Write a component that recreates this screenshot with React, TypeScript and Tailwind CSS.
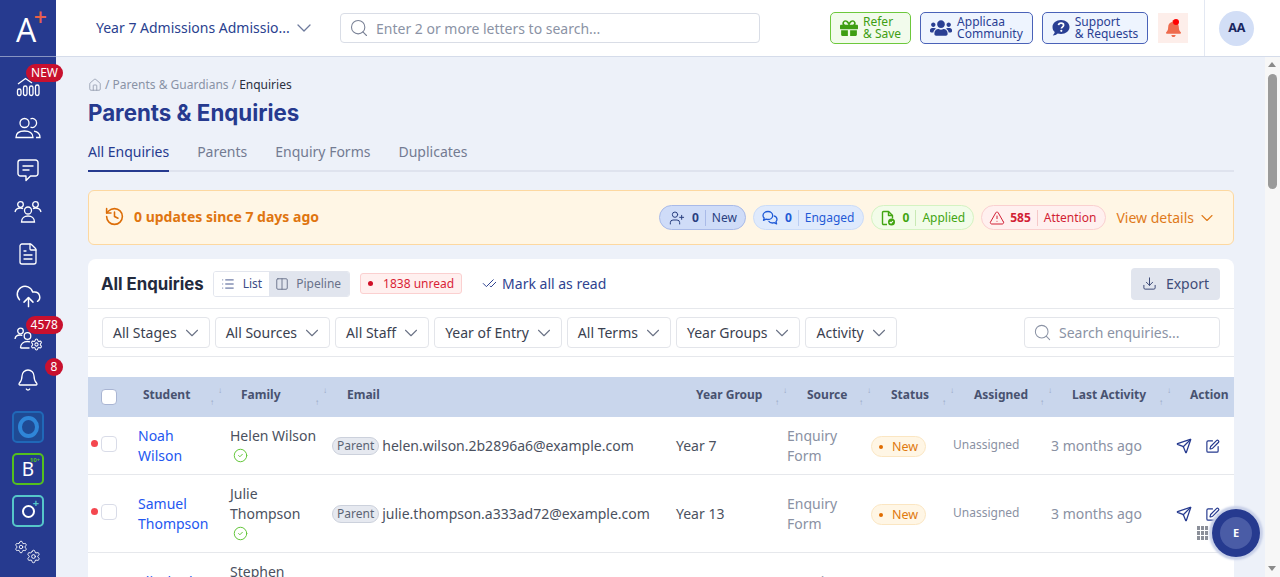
import React from "react";
import {
  House, History, UserPlus, TriangleAlert, ChevronDown, Search, List, Columns2,
  CheckCheck, Download, Send, SquarePen, CircleCheck, FileText, CloudUpload, Bell, Settings,
} from "lucide-react";
import { FaGift, FaUsers, FaBell } from "react-icons/fa";

const Side = ({ children, className = "" }: { children: React.ReactNode; className?: string }) => (
  <div className={`relative flex h-[42px] w-[56px] shrink-0 items-center justify-center text-white ${className}`}>{children}</div>
);

const UserGroup = () => (
  <svg width="28" height="24" viewBox="0 0 28 24" fill="none" stroke="white" strokeWidth="1.3">
    <circle cx="14" cy="10.5" r="3.5" />
    <path d="M7.5 22c0-4 3-6 6.500-6s6.500 2 6.500 6z" />
    <circle cx="6.500" cy="4.500" r="2.800" />
    <circle cx="21.500" cy="4.500" r="2.800" />
    <path d="M1 12c.5-2.500 3-4 5.500-4 1 0 1.800.2 2.500.6M27 12c-.5-2.500-3-4-5.500-4-1 0-1.800.2-2.500.6" />
  </svg>
);

const Sidebar = () => (
  <aside className="flex h-full w-[56px] shrink-0 flex-col bg-[#263a8f]">
    <div className="flex h-[57px] shrink-0 items-center justify-center border-b border-[#c8d0e4]/60">
      <div className="relative h-[30px] w-[30px]">
        <span className="absolute left-[3px] top-[-2px] text-[32px] font-normal leading-[38px] text-white [font-family:'Open_Sans']">A</span>
        <span className="absolute right-[-4px] top-[-8px] text-[23px] font-semibold leading-[25px] text-[#e8604c] [font-family:'Open_Sans']">+</span>
      </div>
    </div>
    <div className="flex flex-col pt-[8px]">
      <Side>
        <svg width="24" height="22" viewBox="0 0 24 22" fill="none" stroke="white" strokeWidth="1.300">
          <path d="M2 9 L9.500 3.500 L16 8" />
          <rect x="1.500" y="14" width="3.500" height="6.500" rx="1.700" />
          <rect x="7.500" y="11" width="3.500" height="9.500" rx="1.700" />
          <rect x="13.500" y="11" width="3.500" height="9.500" rx="1.700" />
          <rect x="19.500" y="10" width="3.500" height="10.500" rx="1.700" />
        </svg>
        <span className="absolute right-[-7px] top-[-1px] flex h-[18px] items-center rounded-full bg-[#c8102e] px-[5px] text-[12px] text-white">NEW</span>
      </Side>
      <Side>
        <svg width="26" height="22" viewBox="0 0 26 22" fill="none" stroke="white" strokeWidth="1.300">
          <circle cx="9.500" cy="6" r="4.500" />
          <path d="M1 20.500c0-4.500 3.500-6.500 8.500-6.500s8.500 2 8.500 6.500z" />
          <path d="M15.500 1.800a4.500 4.500 0 1 1 0 8.400M19 14.200c3.500.6 6 2.600 6 6.300h-4" />
        </svg>
      </Side>
      <Side>
        <svg width="22" height="24" viewBox="0 0 22 24" fill="none" stroke="white" strokeWidth="1.400" strokeLinecap="round" strokeLinejoin="round">
          <path d="M3.500 2h15a2.500 2.500 0 0 1 2.500 2.500v11a2.500 2.500 0 0 1-2.500 2.500h-5L9 22.500V18H3.500A2.500 2.500 0 0 1 1 15.500v-11A2.500 2.500 0 0 1 3.500 2z" />
          <path d="M6 8h10M6 12h6" />
        </svg>
      </Side>
      <Side><UserGroup /></Side>
      <Side><FileText size={24} strokeWidth={1.3} /></Side>
      <Side><CloudUpload size={27} strokeWidth={1.3} /></Side>
      <Side>
        <svg width="28" height="24" viewBox="0 0 28 24" fill="none" stroke="white" strokeWidth="1.3" className="absolute left-[14px] top-[10px]">
          <circle cx="6.500" cy="4" r="2.800" />
          <path d="M1 12c.3-2.500 2.500-4 5-4 .9 0 1.500.1 2.300.5" />
          <circle cx="13.500" cy="9" r="3.300" />
          <path d="M6.500 21c0-4 3-6.500 7-6.500 1 0 1.800.1 2.500.4M6.500 21h9" />
        </svg>
        <Settings size={13} strokeWidth={1.900} className="absolute left-[30px] top-[21px]" />
        <span className="absolute right-[-7px] top-[-1px] flex h-[18px] items-center rounded-full bg-[#c8102e] px-[5px] text-[12px] text-white">4578</span>
      </Side>
      <Side><Bell size={24} strokeWidth={1.3} />
        <span className="absolute right-[-7px] top-[-1px] flex h-[18px] w-[18px] items-center justify-center rounded-full bg-[#c8102e] text-[12px] text-white">8</span>
      </Side>
      <div className="flex flex-col items-center gap-[10px] pt-[10px]">
        <div className="flex h-[32px] w-[32px] items-center justify-center rounded-[5px] border-2 border-[#2068b8] bg-[#1f4a94]">
          <div className="h-[22px] w-[21px] rounded-[50%] border-[4px] border-[#2f86d8]" />
        </div>
        <div className="relative flex h-[32px] w-[32px] items-center justify-center rounded-[5px] border-2 border-[#54c01e] text-[19px] text-white">
          B<span className="absolute right-[2px] top-[1px] text-[6px] font-bold text-[#54c01e]">10+</span>
        </div>
        <div className="relative flex h-[32px] w-[32px] items-center justify-center rounded-[5px] border-2 border-[#56c6c9] text-white">
          <div className="h-[13px] w-[13px] rounded-full border-2 border-white" />
          <span className="absolute right-[3px] top-[-2px] text-[11px] font-bold text-[#56c6c9]">+</span>
        </div>
      </div>
      <div className="relative mt-[13px] h-[26px] w-[56px]">
        <Settings size={14} strokeWidth={1.500} className="absolute left-[14px] top-[0px] text-white" />
        <Settings size={15} strokeWidth={1.500} className="absolute left-[26px] top-[9px] text-white" />
      </div>
    </div>
  </aside>
);

const TopBtn = ({ icon, a, b, green }: { icon: React.ReactNode; a: string; b: string; green?: boolean }) => (
  <div className={`flex h-[32px] items-center gap-[5px] rounded-[5px] border px-[9px] text-[12px] leading-[12px] ${green ? "border-[#6dc83c] bg-[#f2fbec] text-[#3f9e14]" : "border-[#4a62b8] bg-[#eef4fe] text-[#2a3f93]"}`}>
    {icon}
    <div className="flex flex-col"><span>{a}</span><span>{b}</span></div>
  </div>
);

const Header = () => (
  <header className="flex h-[57px] shrink-0 items-center border-b border-[#d5dcea] bg-white">
    <div className="flex w-[284px] shrink-0 items-center pl-[40px] text-[14px] text-[#2a3f8f]">
      <span className="-mt-[1px]">Year 7 Admissions Admissio...</span>
      <ChevronDown size={24} strokeWidth={1.300} className="ml-[2px] text-[#6d7a9c]" />
    </div>
    <div className="flex h-[30px] w-[420px] shrink-0 items-center gap-[7px] rounded-[4px] border border-[#d9dde6] px-[8px] text-[14px] text-[#8b93a5]">
      <Search size={20} strokeWidth={1.3} className="text-[#7a8296]" />
      <span>Enter 2 or more letters to search...</span>
    </div>
    <div className="ml-[70px] flex items-center gap-[9px]">
      <TopBtn green icon={<FaGift size={18} />} a="Refer" b="& Save" />
      <TopBtn icon={<FaUsers size={22} />} a="Applicaa" b="Community" />
      <TopBtn
        icon={
          <svg width="18" height="18" viewBox="0 0 18 18">
            <path d="M9 1c4.700 0 8.500 3 8.500 7S13.700 15 9 15c-1.200 0-2.300-.2-3.300-.5C4.500 15.600 2.800 16.500 .8 16.500c1-1 1.700-2.200 1.900-3.400C1.300 11.900.5 10.100.5 8 .5 4 4.300 1 9 1z" fill="#2a3f93" />
            <path d="M6.500 6.200c.2-1.300 1.200-2 2.600-2 1.500 0 2.500.8 2.500 2 0 1.900-2.200 1.800-2.200 3.300" fill="none" stroke="white" strokeWidth="1.700" />
            <circle cx="9.300" cy="11.800" r="1.100" fill="white" />
          </svg>
        }
        a="Support"
        b="& Requests"
      />
      <div className="relative ml-[1px] flex h-[30px] w-[30px] items-center justify-center bg-[#fdeeea] text-[#ee6b4d]">
        <FaBell size={17} />
        <span className="absolute right-[9px] top-[6px] h-[6px] w-[6px] rounded-full bg-[#f00]" />
      </div>
    </div>
    <div className="ml-[16px] flex h-[56px] flex-1 items-center border-l border-[#e3e8f2] pl-[14px]">
      <div className="flex h-[35px] w-[35px] items-center justify-center rounded-full bg-[#d2def6] text-[12.500px] font-bold text-[#1a2760]">AA</div>
    </div>
  </header>
);

const Pill = ({ cls, icon, n, label, divider, nMl = "ml-[7px]" }: { cls: string; icon: React.ReactNode; n: string; label: string; divider: string; nMl?: string }) => (
  <div className={`flex h-[25px] items-center rounded-full border text-[12px] ${cls}`}>
    {icon}
    <span className={`${nMl} font-bold`}>{n}</span>
    <span className={`mx-[6px] h-[16px] w-px ${divider}`} />
    <span>{label}</span>
  </div>
);

const Filter = ({ label }: { label: string }) => (
  <div className="flex h-[31px] items-center gap-[4px] rounded-[4px] border border-[#e3e5ea] bg-white pl-[10px] pr-[6px] text-[14px] text-[#3a4150]">
    <span>{label}</span>
    <ChevronDown size={22} strokeWidth={1.200} className="text-[#6b7386]" />
  </div>
);

const cols = "grid grid-cols-[50px_92px_102px_344px_111px_84px_82px_98px_125px_58px]";

const Th = ({ label, pl, sort }: { label: string; pl: string; sort?: string }) => (
  <div className={`relative flex h-[40px] items-center pb-[4px] text-[12px] font-bold text-[#485270] ${pl}`}>
    {label}
    {sort && (
      <span className={`absolute top-0 h-[40px] w-[12px] text-[8px] leading-none text-[#98a6c4] ${sort}`}>
        <span className="absolute left-0 top-[21px]">↑</span>
        <span className="absolute right-0 top-[9px]">↓</span>
      </span>
    )}
  </div>
);

type RowT = { s: string[]; f: string[]; email: string; y: string; h: string };

const Row = ({ s, f, email, y, h }: RowT) => (
  <div className={`${cols} ${h} items-center border-b border-[#e6e8ec] bg-white text-[14px] leading-[20px]`}>
    <div className="relative -mt-[3px] flex items-center pl-[13px]">
      <span className="absolute left-[3px] -mt-[2px] h-[7px] w-[7px] rounded-full bg-[#f4474f]" />
      <span className="h-[16px] w-[16px] rounded-[4px] border border-[#d9dce8] bg-white" />
    </div>
    <div className="text-[#2357f0]">{s.map((x) => <div key={x}>{x}</div>)}</div>
    <div className="text-[#4b5160]">
      {f.map((x) => <div key={x}>{x}</div>)}
      <CircleCheck size={15} strokeWidth={1.600} className="mx-[3px] my-[2px] text-[#63c63a]" />
    </div>
    <div className="flex items-center text-[#4b5160]">
      <span className="mr-[3px] flex h-[18px] items-center rounded-full border border-[#ccd1dc] bg-[#e6e9f0] px-[4px] text-[12px] text-[#5c6474]">Parent</span>
      {email}
    </div>
    <div className="text-[#4b5160]">{y}</div>
    <div className="text-[#8a91a3]"><div>Enquiry</div><div>Form</div></div>
    <div>
      <span className="inline-flex h-[21px] items-center gap-[9px] rounded-full border border-[#fbe6c2] bg-[#fff6e5] pl-[7px] pr-[7px] text-[12.500px] text-[#e07a10]">
        <span className="h-[4px] w-[4px] rounded-full bg-[#e06c00]" />New
      </span>
    </div>
    <div className="-mt-[2px] text-[12px] text-[#8a91a3]">Unassigned</div>
    <div className="text-[#8a91a3]">3 months ago</div>
    <div className="mt-[1px] flex items-center gap-[13px] text-[#263a8f]">
      <Send size={16} strokeWidth={1.900} />
      <SquarePen size={15} strokeWidth={1.900} />
    </div>
  </div>
);

const ChatsIcon = () => (
  <svg width="16" height="16" viewBox="0 0 16 16" fill="none" stroke="currentColor" strokeWidth="1.300" strokeLinejoin="round">
    <path d="M6 1.500c2.600 0 4.700 1.800 4.700 4S8.600 9.500 6 9.500c-.7 0-1.300-.1-1.900-.3L1.500 10.300l.7-2.200C1.400 7.400 1 6.500 1 5.500c0-2.200 2.200-4 5-4z" />
    <path d="M11.800 5.800c1.800.4 3.200 1.800 3.200 3.500 0 .9-.4 1.700-1 2.300l.6 2.200-2.500-1.100c-.5.200-1.100.3-1.700.3-1.700 0-3.100-.8-3.800-2" />
  </svg>
);

const FileBadgeIcon = () => (
  <svg width="16" height="16" viewBox="0 0 16 16" fill="none" stroke="currentColor" strokeWidth="1.400" strokeLinejoin="round">
    <path d="M7 14.500H3.500a1 1 0 0 1-1-1v-11a1 1 0 0 1 1-1h5l4 4v3" />
    <path d="M8.500 1.500v4h4" />
    <circle cx="11.500" cy="12" r="3.500" fill="currentColor" stroke="none" />
    <path d="M9.800 12l1.200 1.200 2-2.200" stroke="white" strokeWidth="1.100" />
  </svg>
);

export default function App() {
  return (
    <div className="flex h-[577px] w-[1280px] overflow-hidden bg-[#edf1f9] [font-family:'Noto_Sans',sans-serif]">
      <Sidebar />
      <div className="flex min-w-0 flex-1 flex-col">
        <Header />
        <div className="flex min-h-0 flex-1">
          <main className="w-[1209px] shrink-0 overflow-hidden pl-[32px] pr-[31px]">
            <div className="mt-[17px] flex h-[21px] items-center gap-[3px] text-[12px] text-[#8a93a6]">
              <House size={14} strokeWidth={1.300} /> <span>/ Parents &amp; Guardians /</span> <span className="text-[#2b3040]">Enquiries</span>
            </div>
            <h1 className="mt-[3px] text-[22.300px] font-bold leading-[30px] text-[#263a8f] [font-family:Inter,sans-serif]">Parents &amp; Enquiries</h1>
            <nav className="mt-[13px] flex h-[31px] gap-[28px] border-b-2 border-[#dfe3ee] text-[14px] text-[#737b92]">
              <span className="-mb-[2px] h-[31px] border-b-2 border-[#263a8f] text-[#263a8f]">All Enquiries</span>
              <span>Parents</span>
              <span>Enquiry Forms</span>
              <span>Duplicates</span>
            </nav>
            <section className="mt-[18px] flex h-[55px] items-center rounded-[6px] border border-[#fdd8a0] bg-[#fff6e5] pl-[15px] pr-[16px]">
              <History size={21} strokeWidth={1.800} className="-mt-[2px] text-[#dc6d08]" />
              <span className="-mt-[2px] ml-[9px] text-[14px] font-bold text-[#df7510]">0 updates since 7 days ago</span>
              <div className="ml-auto flex items-center gap-[7px]">
                <Pill cls="border-[#a9bae8] bg-[#cfdcf8] pl-[9px] pr-[8px] text-[#2a3f7f]" divider="bg-[#a9bae8]" icon={<UserPlus size={16} strokeWidth={1.500} />} n="0" label="New" />
                <Pill cls="border-[#cbdcf8] bg-[#dfeafc] px-[8px] text-[#1f5ad6]" divider="bg-[#b9cdf2]" icon={<ChatsIcon />} n="0" label="Engaged" />
                <Pill cls="border-[#d4f3c2] bg-[#f2fce9] px-[8px] text-[#42a512]" divider="bg-[#c8e9b4]" icon={<FileBadgeIcon />} n="0" label="Applied" />
                <Pill cls="border-[#fad0d0] bg-[#fff0ef] pl-[7px] pr-[9px] text-[#d21f35]" divider="bg-[#f5c8c8]" nMl="ml-[5px]" icon={<TriangleAlert size={16} strokeWidth={1.500} />} n="585" label="Attention" />
                <div className="ml-[3px] flex items-center gap-[3px] text-[14px] text-[#e07a1a]">
                  View details <ChevronDown size={20} strokeWidth={1.300} />
                </div>
              </div>
            </section>
            <section className="mt-[14px] overflow-hidden rounded-t-[8px] bg-white">
              <div className="flex h-[50px] items-center border-b border-[#e6e8ec] px-[13px] pr-[14px]">
                <h2 className="mt-[2px] text-[16.800px] font-bold text-[#232a3d] [font-family:Inter,sans-serif]">All Enquiries</h2>
                <div className="ml-[9px] flex h-[26px] overflow-hidden rounded-[3px] border border-[#e3e6ee] text-[12px]">
                  <span className="flex items-center gap-[8px] bg-white px-[7px] text-[#3a4c86]"><List size={14} strokeWidth={1.600} />List</span>
                  <span className="flex items-center gap-[7px] bg-[#e1e5ee] pl-[6px] pr-[8px] text-[#69728a]"><Columns2 size={14} strokeWidth={1.600} />Pipeline</span>
                </div>
                <span className="ml-[10px] flex h-[21px] items-center gap-[10px] rounded-[3px] border border-[#fbd0d0] bg-[#fff0ef] px-[7px] text-[12px] text-[#d91f36]">
                  <span className="h-[5px] w-[5px] rounded-full bg-[#d01028]" />1838 unread
                </span>
                <span className="ml-[20px] flex items-center gap-[5px] text-[14px] text-[#2f4390]"><CheckCheck size={15} strokeWidth={1.600} />Mark all as read</span>
                <span className="ml-auto flex h-[32px] items-center gap-[9px] rounded-[4px] bg-[#e1e5ee] px-[11px] text-[14px] text-[#3f4c78]"><Download size={15} strokeWidth={1.600} />Export</span>
              </div>
              <div className="flex h-[48px] items-center gap-[5px] border-b border-[#e6e8ec] pl-[14px] pr-[14px]">
                {["All Stages", "All Sources", "All Staff", "Year of Entry", "All Terms", "Year Groups", "Activity"].map((x) => <Filter key={x} label={x} />)}
                <div className="ml-auto flex h-[31px] w-[196px] items-center gap-[7px] rounded-[4px] border border-[#e3e5ea] px-[8px] text-[14px] text-[#8b93a5]">
                  <Search size={19} strokeWidth={1.300} />Search enquiries...
                </div>
              </div>
              <div className="h-[20px]" />
              <div className={`${cols} items-center bg-[#c9d6ec]`}>
                <div className="flex items-center pl-[13px]"><span className="h-[16px] w-[16px] rounded-[4px] border border-[#a9b5d3] bg-white" /></div>
                <Th label="Student" pl="pl-[5px]" sort="right-[8px]" />
                <Th label="Family" pl="pl-[11px]" sort="right-[5px]" />
                <Th label="Email" pl="pl-[15px]" />
                <Th label="Year Group" pl="pl-[20px]" sort="right-[0px]" />
                <Th label="Source" pl="pl-[20px]" sort="right-[0px]" />
                <Th label="Status" pl="pl-[20px]" sort="right-[-1px]" />
                <Th label="Assigned" pl="pl-[21px]" sort="right-[-1px]" />
                <Th label="Last Activity" pl="pl-[21px]" sort="right-[5px]" />
                <Th label="Action" pl="pl-[14px]" />
              </div>
              <Row h="h-[58px]" s={["Noah", "Wilson"]} f={["Helen Wilson"]} email="helen.wilson.2b2896a6@example.com" y="Year 7" />
              <Row h="h-[78px]" s={["Samuel", "Thompson"]} f={["Julie", "Thompson"]} email="julie.thompson.a333ad72@example.com" y="Year 13" />
              <Row h="h-[78px]" s={["Elizabeth", "Hall"]} f={["Stephen", "Hall"]} email="stephen.hall.c41e7d90@example.com" y="Year 7" />
            </section>
          </main>
          <div className="relative w-[15px] shrink-0 bg-[#f7f7f7]">
            <span className="absolute left-[3px] top-[5px] h-0 w-0 border-x-[4px] border-b-[5px] border-x-transparent border-b-[#8a8a8a]" />
            <div className="absolute left-[3px] top-[17px] h-[115px] w-[9px] rounded-full bg-[#9a9a9a]" />
            <span className="absolute bottom-[6px] left-[3px] h-0 w-0 border-x-[4px] border-t-[5px] border-x-transparent border-t-[#8a8a8a]" />
          </div>
        </div>
      </div>
      <div className="fixed left-[1212px] top-[509px] flex h-[48px] w-[48px] items-center justify-center rounded-full bg-[#263a8f] shadow-[0_0_2px_3px_#c8d0e8]">
        <div className="flex h-[32px] w-[32px] items-center justify-center rounded-full bg-[#4a5ca6] text-[11px] font-bold text-white">E</div>
      </div>
      <div className="fixed left-[1197px] top-[526px] grid grid-cols-3 gap-[1px]">
        {Array.from({ length: 9 }).map((_, i) => <span key={i} className="h-[4px] w-[3px] bg-[#8b8f99]" />)}
      </div>
    </div>
  );
}
